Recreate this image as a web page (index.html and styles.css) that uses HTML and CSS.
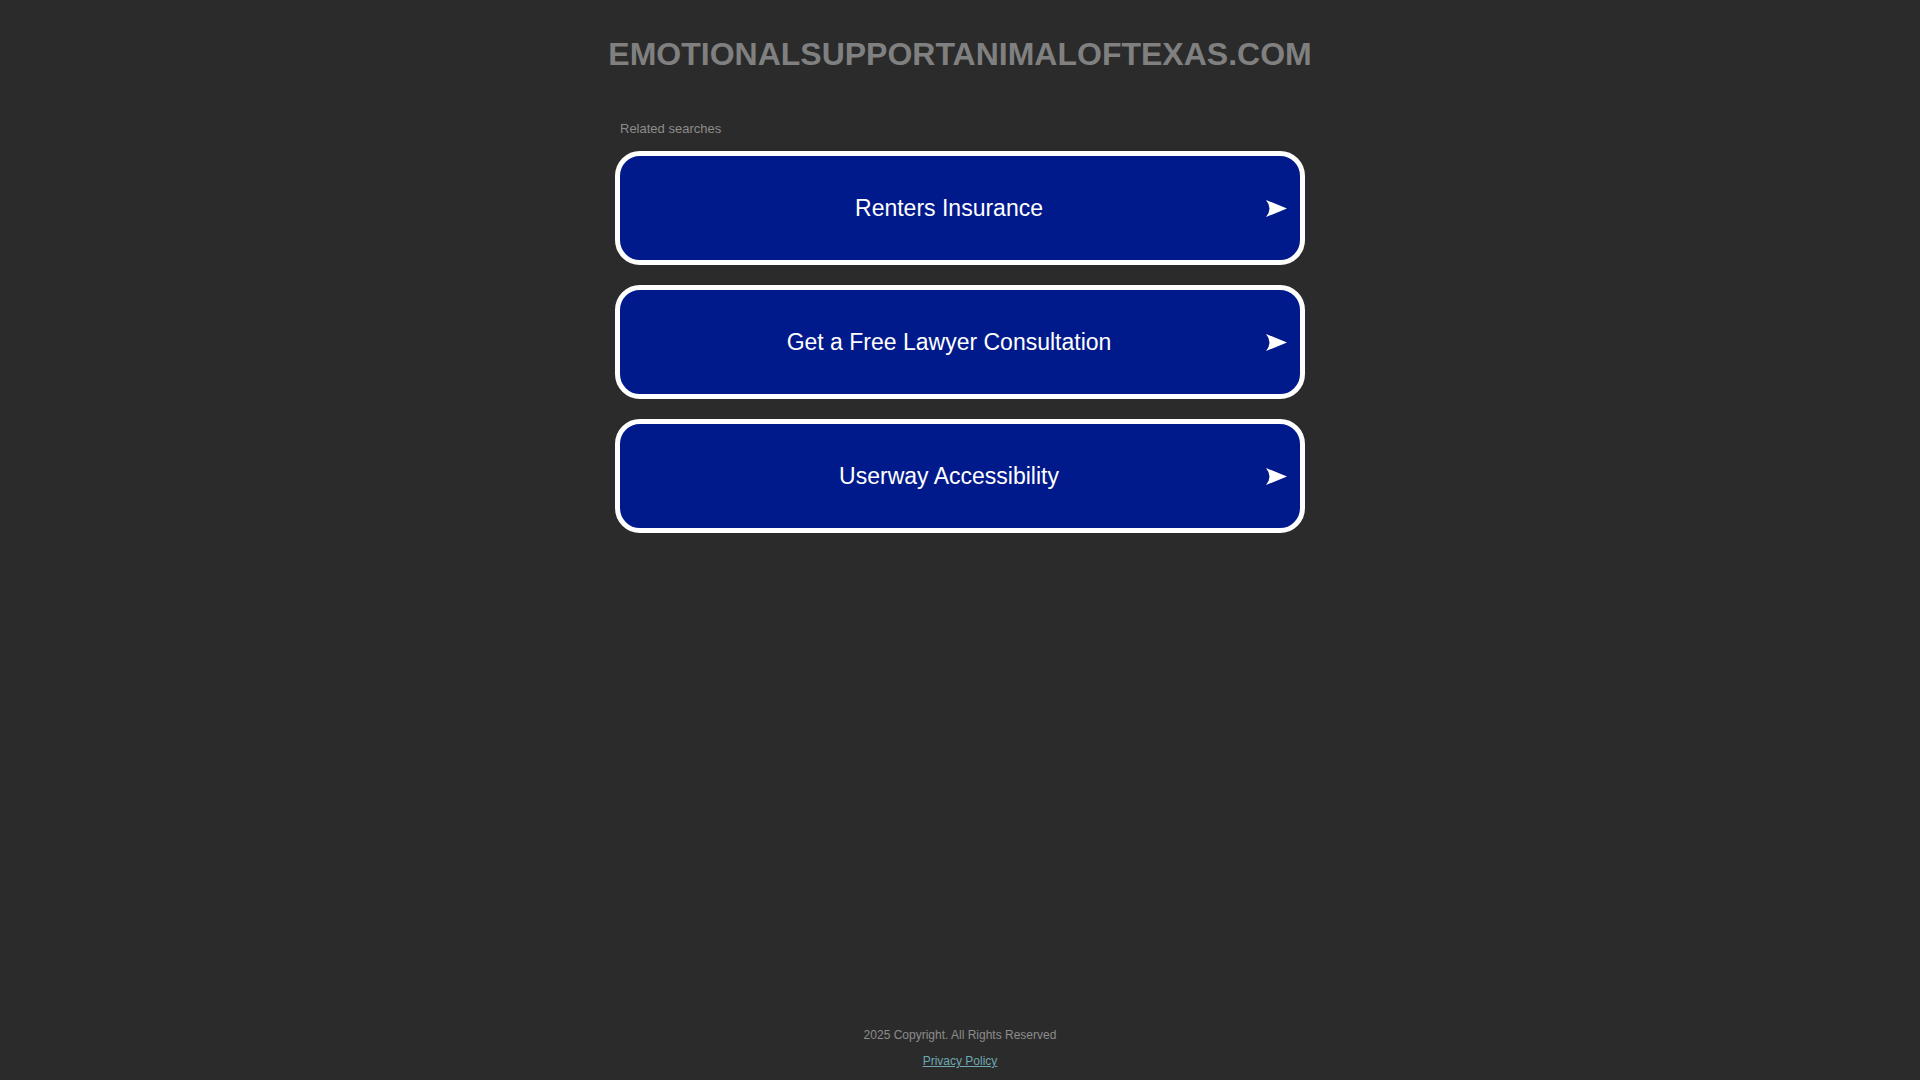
FILE: index.html
```html
<!DOCTYPE html>
<html lang="en">
<head>
<meta charset="utf-8">
<title>emotionalsupportanimaloftexas.com</title>
<link rel="stylesheet" href="styles.css">
</head>
<body>
<div class="page">
  <header class="header">
    <h1 class="domain">EMOTIONALSUPPORTANIMALOFTEXAS.COM</h1>
  </header>
  <main class="main">
    <div class="related">
      <div class="related-title">Related searches</div>
      <div class="ads">
        <a class="ad" href="#">
          <span class="ad-text">Renters Insurance</span>
          <svg class="ad-arrow" viewBox="0 0 21 17" width="21" height="17"><path d="M0 0 L21 8.5 L0 17 Q7 8.5 0 0 Z" fill="#fff"/></svg>
        </a>
        <a class="ad" href="#">
          <span class="ad-text">Get a Free Lawyer Consultation</span>
          <svg class="ad-arrow" viewBox="0 0 21 17" width="21" height="17"><path d="M0 0 L21 8.5 L0 17 Q7 8.5 0 0 Z" fill="#fff"/></svg>
        </a>
        <a class="ad" href="#">
          <span class="ad-text">Userway Accessibility</span>
          <svg class="ad-arrow" viewBox="0 0 21 17" width="21" height="17"><path d="M0 0 L21 8.5 L0 17 Q7 8.5 0 0 Z" fill="#fff"/></svg>
        </a>
      </div>
    </div>
  </main>
  <footer class="footer">
    <div class="copyright">2025 Copyright. All Rights Reserved</div>
    <a class="privacy" href="#">Privacy Policy</a>
  </footer>
</div>
</body>
</html>
```

FILE: styles.css
```css
html, body {
  margin: 0;
  padding: 0;
  background: #2b2b2b;
  font-family: "Liberation Sans", Arial, sans-serif;
}

.page {
  min-height: 100vh;
  display: flex;
  flex-direction: column;
  align-items: center;
}

.header {
  padding-top: 36px;
}

.domain {
  margin: 0;
  font-size: 32px;
  line-height: 36px;
  font-weight: bold;
  color: #808080;
  text-align: center;
}

.main {
  margin-top: 49px;
  width: 690px;
}

.related-title {
  font-size: 13px;
  line-height: 15px;
  color: #8c8c8c;
  padding-left: 5px;
  margin-bottom: 15px;
}

.ads {
  display: flex;
  flex-direction: column;
  gap: 20px;
}

.ad {
  display: flex;
  align-items: center;
  box-sizing: border-box;
  height: 114px;
  padding: 0 13px 0 12px;
  background: #011a8b;
  border: 5px solid #ffffff;
  border-radius: 25px;
  color: #ffffff;
  text-decoration: none;
}

.ad-text {
  flex: 1;
  text-align: center;
  font-size: 23px;
  line-height: 28px;
}

.ad-arrow {
  display: block;
  flex: none;
}

.footer {
  margin-top: auto;
  display: flex;
  flex-direction: column;
  align-items: center;
  gap: 12px;
  padding-bottom: 12px;
  font-size: 12px;
  line-height: 14px;
}

.copyright {
  color: #8c8c8c;
}

.privacy {
  color: #6fa8b1;
  text-decoration: underline;
}
```
